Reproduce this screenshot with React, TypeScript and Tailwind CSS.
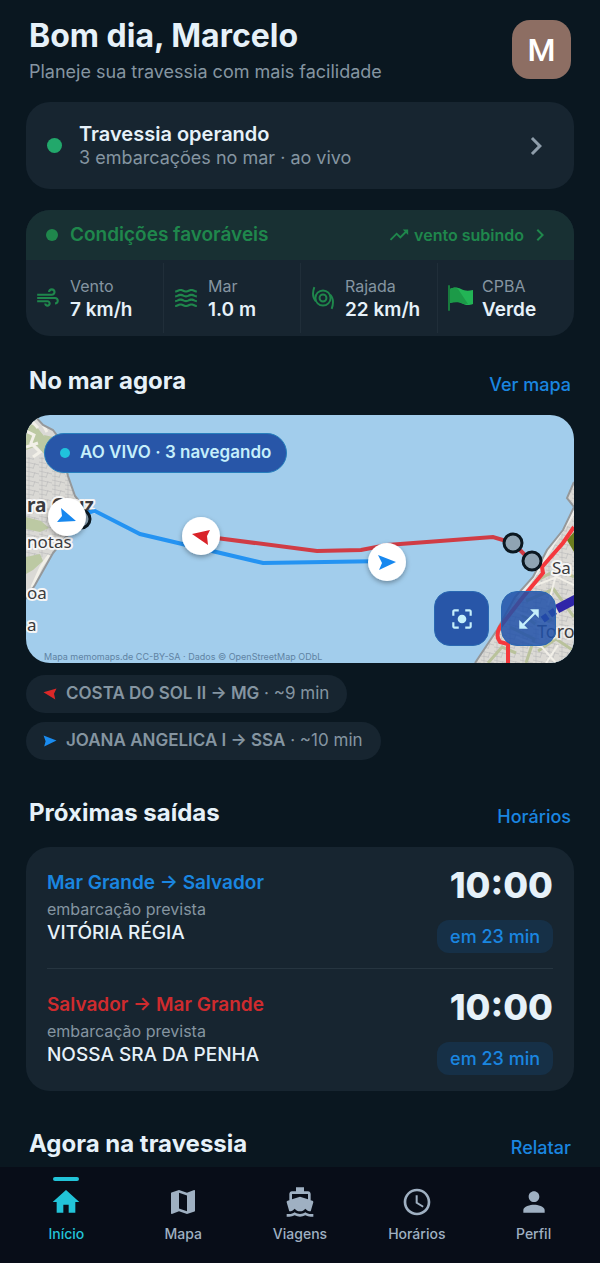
import { cx } from 'class-variance-authority'
import type { ReactNode } from 'react'
import type { IconType } from 'react-icons'
import {
  MdAccessTime,
  MdAir,
  MdCenterFocusStrong,
  MdChevronRight,
  MdDirectionsBoat,
  MdHome,
  MdMap,
  MdOpenInFull,
  MdPerson,
  MdTrendingUp,
  MdWaves,
} from 'react-icons/md'

type Metric = Readonly<{
  label: string
  value: string
  icon: ReactNode
}>

const metrics: Metric[] = [
  { icon: <MdAir className="size-[26px]" />, label: 'Vento', value: '7 km/h' },
  { icon: <MdWaves className="size-[26px]" />, label: 'Mar', value: '1.0 m' },
  { icon: <GustIcon />, label: 'Rajada', value: '22 km/h' },
  { icon: <FlagIcon />, label: 'CPBA', value: 'Verde' },
]

const vessels = [
  { color: 'text-[#dc2828]', eta: '~9 min', flip: true, name: 'COSTA DO SOL II → MG' },
  { color: 'text-[#1a8cf0]', eta: '~10 min', flip: false, name: 'JOANA ANGELICA I → SSA' },
]

const departures = [
  {
    color: 'text-[#1a86e0]',
    eta: 'em 23 min',
    route: 'Mar Grande → Salvador',
    time: '10:00',
    vessel: 'VITÓRIA RÉGIA',
  },
  {
    color: 'text-[#cf2b2e]',
    eta: 'em 23 min',
    route: 'Salvador → Mar Grande',
    time: '10:00',
    vessel: 'NOSSA SRA DA PENHA',
  },
]

const tabs: { icon: IconType; label: string }[] = [
  { icon: MdHome, label: 'Início' },
  { icon: MdMap, label: 'Mapa' },
  { icon: MdDirectionsBoat, label: 'Viagens' },
  { icon: MdAccessTime, label: 'Horários' },
  { icon: MdPerson, label: 'Perfil' },
]

function GustIcon() {
  return (
    <svg
      aria-hidden="true"
      className="size-[26px]"
      fill="none"
      stroke="currentColor"
      strokeWidth="1.8"
      viewBox="0 0 24 24"
    >
      <circle cx="12" cy="12" r="7" />
      <circle cx="12" cy="12" r="3.2" />
      <path d="M4 2C2.2 7 2.6 12 5.4 15M20 22C21.800 17 21.400 12 18.600 9" />
    </svg>
  )
}

function FlagIcon() {
  return (
    <svg aria-hidden="true" className="size-[26px]" viewBox="0 0 26 26">
      <path d="M2 1v24" stroke="#187a3d" strokeLinecap="round" strokeWidth="2" />
      <path
        d="M3 4c4-2 7-2 11 0s7 2 12 1v14c-5 2-8 1-12-1s-7-1-11 0z"
        fill="#22b455"
      />
      <path d="M3 4c4-2 6-1 8 0l10 15c-3 0-5 0-7-1s-7-1-11 0z" fill="#1c9a48" />
    </svg>
  )
}

function VesselArrow({ className, flip }: { className?: string; flip?: boolean }) {
  return (
    <svg
      aria-hidden="true"
      className={cx('h-3 w-[14px] shrink-0', className)}
      viewBox="0 0 14 12"
    >
      <path
        d={
          flip
            ? 'M0.5 4.2 13.5 0.6 11 5.8 12.3 11.6Z'
            : 'M0.6 0.6 13.5 5.6 1.2 11.6 2.6 6.2Z'
        }
        fill="currentColor"
      />
    </svg>
  )
}

function MapDrawing() {
  return (
    <svg
      aria-hidden="true"
      className="block h-[248px] w-full"
      preserveAspectRatio="xMidYMid slice"
      viewBox="0 0 548 248"
    >
      <defs>
        <pattern height="9" id="streets" patternUnits="userSpaceOnUse" width="13">
          <path
            d="M0 2l13 3M3 0v9M9 3l-2 6M0 7l7 1"
            fill="none"
            stroke="#bdbdbd"
            strokeWidth="0.7"
          />
        </pattern>
        <filter height="160%" id="lift" width="160%" x="-30%" y="-30%">
          <feDropShadow dx="0" dy="2" floodOpacity="0.35" stdDeviation="2.5" />
        </filter>
        <clipPath id="west">
          <path d="M0 0H8L17 10 27 15 35 26 38 44 42 61 49 81 58 92 54 108 40 122 27 138 18 154 9 170 0 184Z" />
        </clipPath>
        <clipPath id="east">
          <path d="M548 67 541 83 548 92 537 115 521 135 507 162 489 182 471 215 449 248H548Z" />
        </clipPath>
      </defs>
      <rect fill="#a2cdec" height="248" width="548" />

      {/* Itaparica */}
      <g clipPath="url(#west)">
        <rect fill="#dad9d5" height="190" width="64" />
        <rect fill="url(#streets)" height="100" width="64" y="42" />
        <path
          d="M0 8l10 3 12 15-3 14-8-9-11 4zM0 102l15 4 8 7-9 4-14-3zM0 142l14-3 3 7-10 9-7 4zM18 20l9 2 2 10-8-3z"
          fill="#bcc9a3"
        />
        <path
          d="M0 16l8 4-3 8 9 9-7 5M4 4l8 9M12 0l9 17M0 32l12-4M6 172l9-20 8-12M0 128l22-4"
          fill="none"
          stroke="#f2f0e8"
          strokeWidth="3"
        />
      </g>
      <path
        d="M8 0 17 10 27 15 35 26 38 44 42 61 49 81 58 92 54 108 40 122 27 138 18 154 9 170 0 184"
        fill="none"
        stroke="#95989a"
        strokeWidth="2"
      />

      {/* Salvador */}
      <g clipPath="url(#east)">
        <rect fill="#dcdad5" height="190" width="110" x="440" y="60" />
        <rect fill="url(#streets)" height="190" width="110" x="440" y="60" />
        <path
          d="M510 166l22-12 16 8M500 186l28-12M484 212l24 12-8 24M462 248l14-16 14 6M512 236l18-12 18 12M526 172l22 30M496 200l18 12 12-8"
          fill="none"
          stroke="#b9c29b"
          strokeWidth="3"
        />
        <path
          d="M505 172l26-10 17 8M490 196l40 16M490 222l26 10 14 16M520 248l12-18M530 160l-8 30"
          fill="none"
          stroke="#f1efe8"
          strokeWidth="2"
        />
        <path d="M541 125l7-8v20z" fill="#6b7d1e" />
        <path d="M548 96 528 126 512 154 492 182" fill="none" stroke="#efedea" strokeWidth="5" />
      </g>
      <path
        d="M548 67 541 83 548 92 537 115 521 135 507 162 489 182 471 215 449 248"
        fill="none"
        stroke="#95989a"
        strokeWidth="2"
      />
      <path
        d="M548 112 537 128 516 152 517 158 497 182 474 212Q469 221 474 227L482 229V248"
        fill="none"
        stroke="#f5383c"
        strokeWidth="4"
      />
      <path d="M550 184 531 194" stroke="#2f25a8" strokeWidth="9" />
      <path d="M529 196 516 205" stroke="#2f25a8" strokeDasharray="6 3" strokeWidth="7" />

      {/* place names */}
      <g
        className="font-['Noto_Sans']"
        fill="#3b3b3d"
        fontSize="17"
        paintOrder="stroke"
        stroke="#f6f6f6"
        strokeLinejoin="round"
        strokeWidth="4"
      >
        <text fontSize="19" fontWeight="700" x="1" y="97">
          ra Cruz
        </text>
        <text x="1" y="133">
          notas
        </text>
        <text x="1" y="184">
          oa
        </text>
        <text x="1" y="216">
          a
        </text>
        <text x="526" y="159">
          Sa
        </text>
        <text fontSize="18" strokeOpacity="0.6" x="511" y="223">
          Toro
        </text>
      </g>

      <path d="M60 98 69 96 114 119 237 148 361 146" fill="none" stroke="#2493f2" strokeWidth="4" />
      <path
        d="M175 121 291 136 335 135 361 130 467 122 487 128 506 147"
        fill="none"
        stroke="#d03c45"
        strokeWidth="4"
      />
      <g fill="#8fa4b3" stroke="#0b1821" strokeWidth="3">
        <circle cx="55" cy="104" r="9" />
        <circle cx="487" cy="128" r="9" />
        <circle cx="506" cy="146" r="9" />
      </g>
      <g fill="#fff" filter="url(#lift)">
        <circle cx="41" cy="102" r="19" />
        <circle cx="175" cy="121" r="19" />
        <circle cx="361" cy="147" r="19" />
      </g>
      <path d="M35 93 50 106 31 107 36 101Z" fill="#1788ef" />
      <path d="M166 119 184 115 181 121 182 130Z" fill="#d92329" />
      <path d="M352 140 370 147 353 155 356 148Z" fill="#1788ef" />
    </svg>
  )
}

function SectionHeader({ title, action }: { title: string; action: string }) {
  return (
    <div className="flex items-end justify-between px-[3px]">
      <h2 className="font-bold text-2xl leading-8 text-[#e6f1f9]">{title}</h2>
      <a className="font-medium text-lg leading-6 text-[#1a86e0]" href="#">
        {action}
      </a>
    </div>
  )
}

export default function App() {
  return (
    <div className="flex min-h-screen flex-col bg-[#0a1720] font-[Inter,sans-serif]">
      <main className="flex-1 px-[26px]">
        <header className="flex items-start justify-between px-[3px] pt-5">
          <div>
            <h1 className="font-bold text-[32px] leading-8 text-[#e6f1f9]">
              Bom dia, Marcelo
            </h1>
            <p className="mt-2 text-lg leading-6 text-[#8595a1]">
              Planeje sua travessia com mais facilidade
            </p>
          </div>
          <button
            aria-label="Conta de Marcelo"
            className="size-[59px] rounded-[18px] bg-[#8d6e63] font-[Roboto,sans-serif] font-medium text-[32px] text-white"
            type="button"
          >
            M
          </button>
        </header>

        <button
          className="mt-[18px] flex h-[87px] w-full items-center rounded-3xl bg-[#172530] pr-5 pl-5 text-left"
          type="button"
        >
          <span className="mx-px size-[15px] rounded-full bg-[#22a86b]" />
          <span className="ml-4 flex-1">
            <span className="block font-semibold text-xl leading-6 text-[#e6f1f9]">
              Travessia operando
            </span>
            <span className="block text-lg leading-6 text-[#8595a1]">
              3 embarcações no mar · ao vivo
            </span>
          </span>
          <MdChevronRight className="size-9 text-[#8e9daa]" />
        </button>

        <section className="mt-[21px] overflow-hidden rounded-3xl bg-[#172530] text-[#1f874c]">
          <button
            className="flex h-[50px] w-full items-center bg-[#183033] pr-[22px] pl-5"
            type="button"
          >
            <span className="size-3 rounded-full bg-[#1f874c]" />
            <span className="ml-3 font-semibold text-[19px]">Condições favoráveis</span>
            <MdTrendingUp className="mr-1 ml-auto size-[22px]" />
            <span className="font-semibold text-base">vento subindo</span>
            <MdChevronRight className="ml-1 size-6" />
          </button>
          <dl className="grid h-[76px] grid-cols-4 items-center">
            {metrics.map((metric, index) => (
              <div
                className={cx(
                  'flex h-[70px] items-center gap-[9px] pl-[9px]',
                  index > 0 && 'border-[#202e39] border-l',
                )}
                key={metric.label}
              >
                {metric.icon}
                <div>
                  <dt className="text-base leading-6 text-[#8595a1]">{metric.label}</dt>
                  <dd className="font-semibold text-[19px] leading-6 text-[#e6f1f9]">
                    {metric.value}
                  </dd>
                </div>
              </div>
            ))}
          </dl>
        </section>

        <section className="mt-[29px]">
          <SectionHeader action="Ver mapa" title="No mar agora" />
          <div className="relative mt-[18px] overflow-hidden rounded-3xl">
            <MapDrawing />
            <div className="absolute top-[18px] left-[18px] flex h-10 items-center gap-[10px] rounded-full border border-[#277fbd] bg-[#2856a8] px-[15px] font-semibold text-[17px] text-[#c5effb]">
              <span className="size-[10px] rounded-full bg-[#20c3dc]" />
              AO VIVO · 3 navegando
            </div>
            <div className="absolute right-[18px] bottom-[17px] flex gap-3 text-[#c5effb]">
              <button
                aria-label="Centralizar mapa"
                className="flex size-[55px] items-center justify-center rounded-2xl border border-[#2a68b2] bg-[#2856a8]"
                type="button"
              >
                <MdCenterFocusStrong className="size-[26px]" />
              </button>
              <button
                aria-label="Expandir mapa"
                className="flex size-[55px] items-center justify-center rounded-2xl border border-[#2a68b2] bg-[#2050a8]/85"
                type="button"
              >
                <MdOpenInFull className="size-[26px]" />
              </button>
            </div>
            <p className="absolute bottom-0 left-[18px] text-[9px] leading-3 text-[#6083a3]">
              Mapa memomaps.de CC-BY-SA · Dados © OpenStreetMap ODbL
            </p>
          </div>

          <ul className="mt-3 flex flex-col items-start gap-[9px]">
            {vessels.map((vessel) => (
              <li
                className="flex h-[38px] items-center gap-[9px] rounded-full bg-[#172530] pr-[18px] pl-[17px] text-[17px] text-[#8595a1]"
                key={vessel.name}
              >
                <VesselArrow className={vessel.color} flip={vessel.flip} />
                <span>
                  <span className="font-semibold">{vessel.name}</span> · {vessel.eta}
                </span>
              </li>
            ))}
          </ul>
        </section>

        <section className="mt-[37px]">
          <SectionHeader action="Horários" title="Próximas saídas" />
          <div className="mt-[18px] divide-y divide-[#263540] rounded-3xl bg-[#172530] px-[21px]">
            {departures.map((departure) => (
              <article
                className="flex h-[122px] items-start justify-between pt-[18px]"
                key={departure.route}
              >
                <div>
                  <h3 className={cx('mt-1 font-semibold text-[19px] leading-7', departure.color)}>
                    {departure.route}
                  </h3>
                  <p className="text-base leading-6 text-[#8595a1]">embarcação prevista</p>
                  <p className="font-medium text-[19px] leading-6 text-[#e6f1f9]">
                    {departure.vessel}
                  </p>
                </div>
                <div className="flex flex-col items-end">
                  <time className="font-extrabold text-4xl leading-10 text-[#e6f1f9]">
                    {departure.time}
                  </time>
                  <span className="mt-[15px] flex h-[33px] items-center rounded-xl bg-[#163047] px-[13px] font-medium text-lg text-[#1a86e0]">
                    {departure.eta}
                  </span>
                </div>
              </article>
            ))}
          </div>
        </section>

        <section className="mt-[37px]">
          <SectionHeader action="Relatar" title="Agora na travessia" />
        </section>
      </main>

      <nav className="sticky bottom-0 mt-1 grid h-24 grid-cols-5 bg-[#080d18] px-2">
        {tabs.map((tab, index) => (
          <a
            aria-current={index === 0 ? 'page' : undefined}
            className={cx(
              'flex flex-col items-center pt-[10px] font-medium text-sm leading-5',
              index === 0 ? 'text-[#22c3d8]' : 'text-[#9fb0c2]',
            )}
            href="#"
            key={tab.label}
          >
            <span className={cx('h-1 w-[26px] rounded-full', index === 0 && 'bg-[#22c3d8]')} />
            <tab.icon className="mt-[5px] mb-[6px] size-8" />
            {tab.label}
          </a>
        ))}
      </nav>
    </div>
  )
}
